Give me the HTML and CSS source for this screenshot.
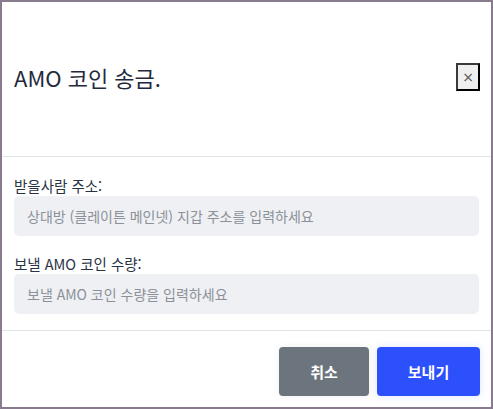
FILE: index.html
```html
<!DOCTYPE html>
<html lang="ko">
<head>
<meta charset="utf-8">
<link rel="stylesheet" href="styles.css">
</head>
<body>
<div class="modal">
  <div class="modal-header">
    <h5 class="modal-title">AMO 코인 송금.</h5>
    <button class="close-btn" type="button">×</button>
  </div>
  <div class="modal-body">
    <label class="field-label">받을사람 주소:</label>
    <input class="field-input" type="text" placeholder="상대방 (클레이튼 메인넷) 지갑 주소를 입력하세요">
    <label class="field-label second">보낼 AMO 코인 수량:</label>
    <input class="field-input" type="text" placeholder="보낼 AMO 코인 수량을 입력하세요">
  </div>
  <div class="modal-footer">
    <button class="btn btn-cancel" type="button">취소</button>
    <button class="btn btn-send" type="button">보내기</button>
  </div>
</div>
</body>
</html>
```

FILE: styles.css
```css
* { box-sizing: border-box; }
html, body { margin: 0; padding: 0; }
body {
  width: 493px;
  height: 409px;
  font-family: "Noto Sans CJK KR", "Noto Sans", sans-serif;
  background: #fff;
}
.modal {
  width: 493px;
  height: 409px;
  border: 2px solid #877b8d;
  background: #fff;
  display: flex;
  flex-direction: column;
}
.modal-header {
  height: 155px;
  padding: 0 11px 4px 12px;
  display: flex;
  align-items: center;
  justify-content: space-between;
  border-bottom: 1px solid #e1e3e7;
}
.modal-title {
  margin: 0;
  font-size: 22px;
  font-weight: 400;
  color: #1f2a3d;
  line-height: 30px;
}
.close-btn {
  width: 24px;
  height: 28px;
  padding: 0;
  background: #efefef;
  border-style: solid;
  border-width: 2px;
  border-color: #3a3a3a #000 #000 #3a3a3a;
  color: #555;
  font-size: 14px;
  line-height: 1;
  font-family: "DejaVu Sans", sans-serif;
}
.modal-body {
  padding: 18px 12px 16px;
  display: flex;
  flex-direction: column;
  border-bottom: 1px solid #e1e3e7;
}
.field-label {
  font-size: 14.5px;
  line-height: 21px;
  color: #2a3344;
}
.field-label.second { margin-top: 17px; }
.field-input {
  height: 40px;
  border: none;
  border-radius: 5px;
  background: #eef0f4;
  padding: 0 13px;
  font-family: "Noto Sans CJK KR", "Noto Sans", sans-serif;
  font-size: 14px;
  color: #333;
  outline: none;
}
.field-input::placeholder { color: #8c9199; }
.modal-footer {
  flex: 1;
  display: flex;
  justify-content: flex-end;
  align-items: flex-start;
  gap: 8px;
  padding: 16px 11px 0;
}
.btn {
  height: 49px;
  border: none;
  border-radius: 4px;
  color: #fff;
  font-family: "Noto Sans CJK KR", sans-serif;
  font-size: 15px;
  font-weight: 700;
}
.btn-cancel {
  width: 90px;
  background: #6c757d;
  box-shadow: 0 0 6px rgba(108, 117, 125, 0.12);
}
.btn-send {
  width: 103px;
  background: #2b50fc;
  box-shadow: 0 0 8px rgba(43, 80, 252, 0.15);
}
```
